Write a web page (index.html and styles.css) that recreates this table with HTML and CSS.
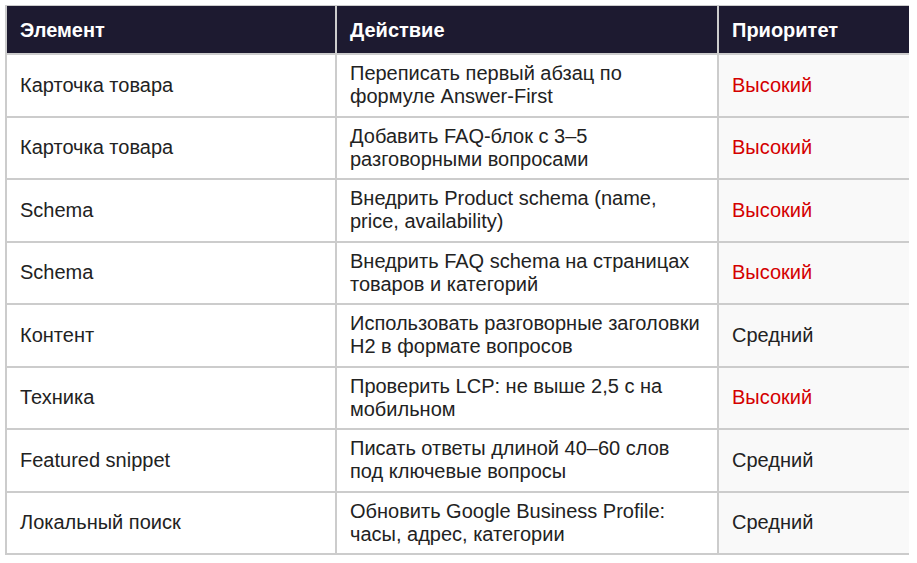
FILE: index.html
```html
<!DOCTYPE html>
<html lang="ru">
<head>
<meta charset="utf-8">
<link rel="stylesheet" href="styles.css">
</head>
<body>
<table class="tbl">
  <colgroup><col class="c1"><col class="c2"><col class="c3"></colgroup>
  <thead>
    <tr><th>Элемент</th><th>Действие</th><th>Приоритет</th></tr>
  </thead>
  <tbody>
    <tr><td>Карточка товара</td><td>Переписать первый абзац по формуле Answer-First</td><td class="high">Высокий</td></tr>
    <tr><td>Карточка товара</td><td>Добавить FAQ-блок с 3–5 разговорными вопросами</td><td class="high">Высокий</td></tr>
    <tr><td>Schema</td><td>Внедрить Product schema (name, price, availability)</td><td class="high">Высокий</td></tr>
    <tr><td>Schema</td><td>Внедрить FAQ schema на страницах товаров и категорий</td><td class="high">Высокий</td></tr>
    <tr><td>Контент</td><td>Использовать разговорные заголовки H2 в формате вопросов</td><td>Средний</td></tr>
    <tr><td>Техника</td><td>Проверить LCP: не выше 2,5 с на мобильном</td><td class="high">Высокий</td></tr>
    <tr><td>Featured snippet</td><td>Писать ответы длиной 40–60 слов под ключевые вопросы</td><td>Средний</td></tr>
    <tr><td>Локальный поиск</td><td>Обновить Google Business Profile: часы, адрес, категории</td><td>Средний</td></tr>
  </tbody>
</table>
</body>
</html>
```
FILE: styles.css
```css
html, body { background: #fff; }
body {
  margin: 5px 8px 0 5px;
  font-family: "Liberation Sans", Arial, sans-serif;
  color: #222;
}
.tbl {
  width: 904px;
  border-collapse: collapse;
  table-layout: fixed;
  font-size: 20px;
  line-height: 23px;
}
.c1 { width: 330px; }
.c2 { width: 382px; }
.c3 { width: 192px; }
.tbl th {
  background: #1d1a30;
  color: #fff;
  font-weight: bold;
  text-align: left;
  padding: 13px 13px 11px 13px;
  border: 2px solid #cccccc;
  border-top-width: 1px;
}
.tbl td {
  padding: 7px 13px 7.5px 13px;
  border: 2px solid #cccccc;
  vertical-align: middle;
}
.tbl td:nth-child(3) { background: #f9f9f9; }
.tbl td.high { color: #d40000; }
```
